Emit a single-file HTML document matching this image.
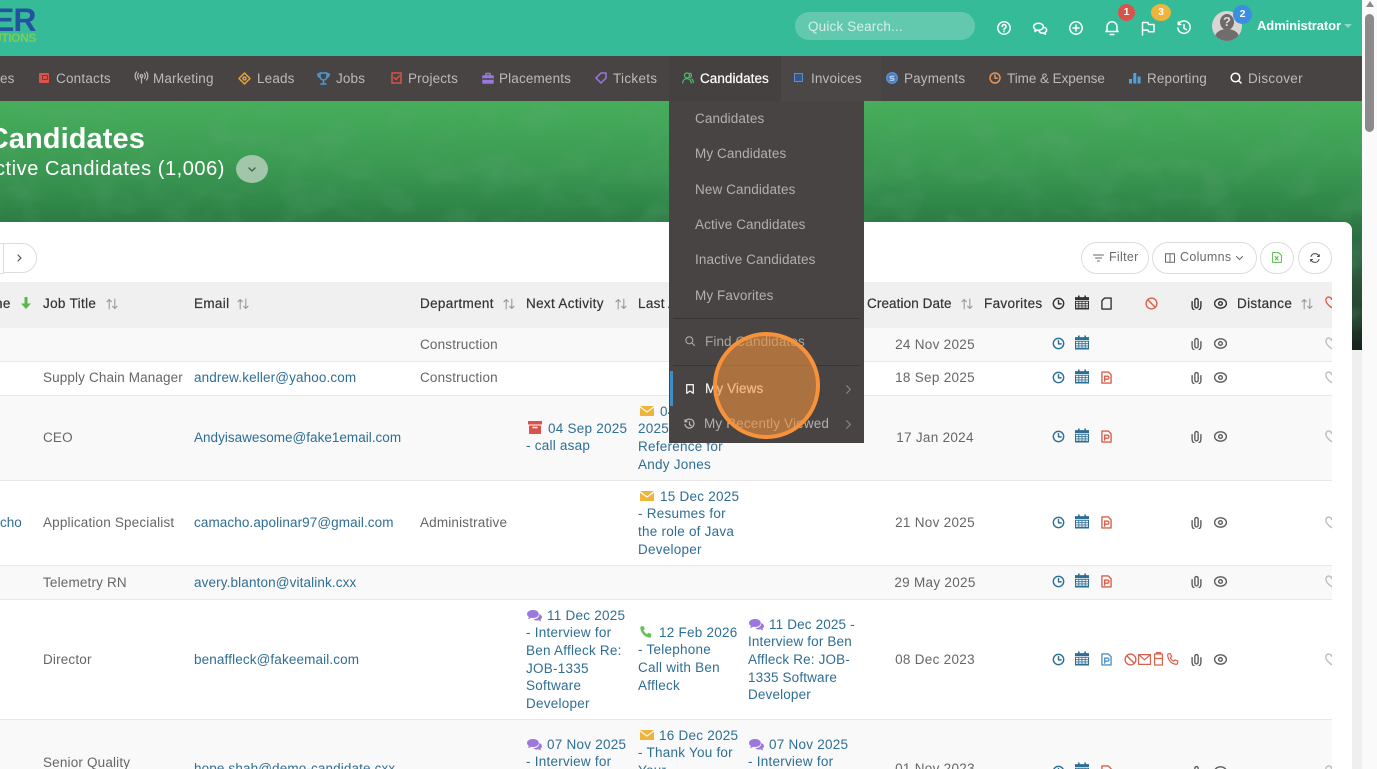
<!DOCTYPE html>
<html><head><meta charset="utf-8"><title>Candidates</title>
<style>
html,body{margin:0;padding:0;width:1377px;height:769px;overflow:hidden;background:#fff}
body{position:relative;font-family:"Liberation Sans",sans-serif;font-size:13.5px;letter-spacing:.17px;color:#666}
.a,.t,svg.i{position:absolute}
.t{white-space:nowrap;line-height:18px;margin-top:1px}
.n{color:#bdbab8;top:69px;letter-spacing:.15px}
.m{color:#b3b0ae;left:695px;letter-spacing:.1px}
.h{color:#333;top:294px;letter-spacing:.33px;-webkit-text-stroke:.2px #333}
.l{color:#2e6e94;line-height:17.8px;letter-spacing:.13px}
.la{letter-spacing:.24px;line-height:17.7px;margin-top:.6px}
.d{width:100px;left:885px;text-align:center;letter-spacing:.3px}
svg.i{fill:none;stroke:currentColor;stroke-width:1.5;stroke-linecap:round;stroke-linejoin:round;overflow:visible}
.cl{color:#2e6e94}.gr{color:#5c5c5c}.rd{color:#d9604c}
.pill{position:absolute;top:242px;height:30px;border:1px solid #dcdcdc;border-radius:16px;background:#fff}
.row{position:absolute;left:0;width:1332px;border-bottom:1px solid #e8e8e8}
</style></head><body>
<svg width="0" height="0" style="position:absolute"><defs>
<filter id="tx" x="0" y="0" width="100%" height="100%"><feTurbulence type="fractalNoise" baseFrequency=".025 .035" numOctaves="3" seed="7"/><feColorMatrix values="0 0 0 0 .12  0 0 0 0 .38  0 0 0 0 .18  0 0 0 2.2 -.95"/></filter>
<symbol id="clock" viewBox="0 0 14 14"><circle cx="7" cy="7" r="5.600"/><path d="M7 3.800V7.400H9.800"/></symbol>
<symbol id="cal" viewBox="0 0 14 14"><path fill="currentColor" stroke="none" d="M3 0h1.600v1.600h4.800V0H11v1.600h3v3H0v-3h3zM0 5.400h14V14H0zM1 6.300v1.400h2.400V6.300zm3.200 0v1.400h2.400V6.300zm3.200 0v1.400h2.400V6.300zm3.200 0v1.400H13V6.300zM1 8.600V10h2.400V8.600zm3.200 0V10h2.400V8.600zm3.200 0V10h2.400V8.600zm3.200 0V10H13V8.600zM1 10.900v1.400h2.400v-1.400zm3.200 0v1.400h2.400v-1.400zm3.200 0v1.400h2.400v-1.400zm3.200 0v1.400H13v-1.400z"/></symbol>
<symbol id="doc" viewBox="0 0 12 14"><path d="M1 1h7l3 3v9H1z"/><path d="M4 5.500h3a1.500 1.500 0 0 1 0 3.400H4zM4 5.500V11"/></symbol>
<symbol id="note" viewBox="0 0 12 14"><path d="M4 1h7v12H1V4z"/></symbol>
<symbol id="ban" viewBox="0 0 14 14"><circle cx="7" cy="7" r="5.800"/><path d="M3 3l8 8"/></symbol>
<symbol id="clip" viewBox="0 0 12 14"><path d="M7.800 4v6a1.800 1.800 0 0 1-3.600 0V3.400a1.800 1.800 0 0 1 3.600 0M10.800 5v5.200a4.800 4.800 0 0 1-9.600 0V5"/></symbol>
<symbol id="eye" viewBox="0 0 14 14"><ellipse cx="7" cy="7" rx="6.400" ry="5"/><circle cx="7" cy="7" r="2"/></symbol>
<symbol id="heart" viewBox="0 0 14 14"><path d="M7 12.500C3 9.500 1 7.400 1 4.800A3 3 0 0 1 7 3.600 3 3 0 0 1 13 4.800C13 7.400 11 9.500 7 12.500z"/></symbol>
<symbol id="sort" viewBox="0 0 12 12"><path d="M3.200 11V1.500M1 3.700l2.200-2.200 2.200 2.200M8.800 1v9.500M6.600 8.300l2.200 2.200L11 8.300"/></symbol>
<symbol id="env" viewBox="0 0 14 10"><path fill="currentColor" stroke="none" d="M0 0h14L7 5.200zM0 1.600l7 5.200 7-5.200V10H0z"/></symbol>
<symbol id="chat" viewBox="0 0 15 12"><path fill="currentColor" stroke="none" d="M6 0c3.300 0 5.800 1.700 5.800 4s-2.500 4-5.800 4c-.7 0-1.300 0-1.900-.2C3.100 8.600 2 9 .8 9c.6-.6 1-1.300 1.100-2C.7 6.300 0 5.200 0 4c0-2.300 2.700-4 6-4zM12.700 4.200c1.400.6 2.300 1.700 2.300 2.900 0 1-.6 1.900-1.600 2.500.1.600.5 1.200 1 1.700-1 0-2-.3-2.800-1-.5.100-1 .2-1.600.2-1.500 0-2.900-.5-3.700-1.300 3.600-.1 6.300-2.200 5.900-5z"/></symbol>
</defs></svg>

<!-- banner -->
<div class="a" style="left:0;top:101px;width:1362px;height:249px;background:linear-gradient(180deg,#46ae5b 0%,#3c9b53 25%,#2f8648 42%,#2f6c44 56%,#2b5238 74%,#1f3627 90%,#17241b 100%)"></div>
<svg class="a" style="left:0;top:101px;opacity:.26" width="1362" height="249"><rect width="1362" height="249" filter="url(#tx)"/></svg>
<div class="a" style="left:1352px;top:350px;width:10px;height:419px;background:#efefef"></div>
<div class="a" style="left:1362px;top:0;width:15px;height:769px;background:#fafafa"></div>
<div class="a" style="left:1365px;top:14px;width:9px;height:118px;border-radius:5px;background:#8c8a8a"></div>
<div class="a" style="left:1366px;top:1px;width:0;height:0;border-left:4px solid transparent;border-right:4px solid transparent;border-bottom:6px solid #8c8a8a"></div>

<!-- top bar -->
<div class="a" style="left:0;top:0;width:1362px;height:56px;background:#36bb99"></div>
<div class="t" style="left:-7px;top:3px;font:bold 32px/32px 'Liberation Sans',sans-serif;letter-spacing:-1px;color:#2352a0">ER</div>
<div class="t" style="left:-7px;top:31px;font:bold 12px/12px 'Liberation Sans',sans-serif;letter-spacing:-.4px;color:#7dcb5a">UTIONS</div>
<div class="a" style="left:795px;top:12px;width:180px;height:28px;border-radius:14px;background:#62c9ae"></div>
<div class="t" style="left:808px;top:17px;color:#d3f0e8">Quick Search...</div>
<svg class="i" style="left:997px;top:21px;color:#fff" width="14" height="14" viewBox="0 0 14 14"><circle cx="7" cy="7" r="6.200"/><path d="M5.200 5.500a1.900 1.900 0 1 1 2.800 1.700c-.7.400-1 .8-1 1.500M7 10.500v.1"/></svg>
<svg class="i" style="left:1032px;top:22px;color:#fff" width="16" height="14" viewBox="0 0 16 14"><path d="M6.500 1.200c2.800 0 4.800 1.600 4.800 3.500 0 2-2 3.500-4.800 3.500-.5 0-1 0-1.500-.2L3 9.500l.3-2.300C2.300 6.500 1.600 5.700 1.600 4.700c0-1.900 2.100-3.500 4.900-3.500z"/><path d="M11.500 5.200c2 .4 3.100 1.500 3.100 2.900 0 1-.6 1.800-1.400 2.300l.2 1.800-1.700-1.200c-2.200.4-4-.5-4.700-2.200"/></svg>
<svg class="i" style="left:1069px;top:21px;color:#fff" width="14" height="14" viewBox="0 0 14 14"><circle cx="7" cy="7" r="6.200"/><path d="M7 4v6M4 7h6"/></svg>
<svg class="i" style="left:1105px;top:20px;color:#fff" width="14" height="16" viewBox="0 0 14 16"><path d="M2 11.500V6.800a5 5 0 0 1 10 0v4.700zM.8 11.500h12.400M5.200 14.500h3.600"/></svg>
<svg class="i" style="left:1141px;top:21px;color:#fff" width="14" height="15" viewBox="0 0 14 15"><path d="M1.500 14V1.500h5.500l.5 2h5.500v7.200H7.500l-.5-1.600H1.500"/></svg>
<svg class="i" style="left:1177px;top:21px;color:#fff" width="14" height="14" viewBox="0 0 14 14"><path d="M1.500 3.200A6.200 6.200 0 1 1 .8 7M1.300 1v2.500h2.500M7 3.800v3.500l2.400 1.300"/></svg>
<div class="a" style="left:1118px;top:4px;width:17px;height:17px;border-radius:50%;background:#d9534a;color:#fff;font:bold 10.500px/17px 'Liberation Sans',sans-serif;text-align:center;letter-spacing:0">1</div>
<div class="a" style="left:1151px;top:4px;width:20px;height:17px;border-radius:50%;background:#efb43c;color:#fff;font:bold 10.500px/17px 'Liberation Sans',sans-serif;text-align:center;letter-spacing:0">3</div>
<div class="a" style="left:1212px;top:11px;width:30px;height:30px;border-radius:50%;background:#d8d5d3;overflow:hidden"><div class="a" style="left:8px;top:3px;width:14px;height:16px;border-radius:50%;background:#6e6a69"></div><div class="a" style="left:3px;top:18px;width:24px;height:16px;border-radius:50%;background:#716d6c"></div><div class="t" style="left:11px;top:1px;color:#ddd;font:bold 13px/17px 'Liberation Sans',sans-serif;letter-spacing:0">?</div></div>
<div class="a" style="left:1233px;top:5px;width:19px;height:19px;border-radius:50%;background:#3c8ee0;color:#fff;font:bold 10.500px/19px 'Liberation Sans',sans-serif;text-align:center;letter-spacing:0">2</div>
<div class="t" style="left:1257px;top:16px;color:#fff;font-weight:bold;font-size:13px;letter-spacing:-.1px">Administrator</div>
<div class="a" style="left:1344px;top:24px;width:0;height:0;border-left:4px solid transparent;border-right:4px solid transparent;border-top:4px solid #8fd8c5"></div>

<!-- nav -->
<div class="a" style="left:0;top:56px;width:1362px;height:45px;background:#474443"></div>
<div class="a" style="left:781px;top:56px;width:100px;height:45px;background:#4a4746"></div>
<div class="t n" style="left:0">es</div>
<div class="a" style="left:39px;top:73px;width:10px;height:10px;background:#d9534a;border-radius:1px"></div><div class="a" style="left:42px;top:75px;width:4px;height:3px;border:1px solid #7a3a34;border-radius:1px"></div><div class="t n" style="left:56px;letter-spacing:.2px">Contacts</div>
<svg class="i" style="left:135px;top:72px;color:#b7b4b2;stroke-width:1.300" width="13" height="12" viewBox="0 0 13 12"><circle cx="6.500" cy="4" r="1.300"/><path d="M6.500 5.500V11M3.500 1.500a4 4 0 0 0 0 5M9.500 1.500a4 4 0 0 1 0 5M1.500 0a6.500 6.500 0 0 0 0 8M11.500 0a6.500 6.500 0 0 1 0 8"/></svg><div class="t n" style="left:153px">Marketing</div>
<svg class="i" style="left:238px;top:72px;color:#e8a33d" width="13" height="13" viewBox="0 0 13 13"><path d="M6.500 1L12 6.500 6.500 12 1 6.500z"/><circle cx="6.500" cy="6.500" r="1.500"/></svg><div class="t n" style="left:257px">Leads</div>
<svg class="i" style="left:317px;top:72px;color:#4a9bd6" width="13" height="13" viewBox="0 0 13 13"><path d="M3 1h7v3.500a3.500 3.500 0 0 1-7 0zM3 2H.8c0 2 .8 3 2.500 3.500M10 2h2.200c0 2-.8 3-2.500 3.500M6.500 8v3M4 12h5"/></svg><div class="t n" style="left:336px">Jobs</div>
<svg class="i" style="left:391px;top:72px;color:#d9534a" width="11" height="12" viewBox="0 0 11 12"><path d="M1 1h9v10H1zM3 5.500l2 2 3.200-3.500"/></svg><div class="t n" style="left:408px">Projects</div>
<svg class="i" style="left:482px;top:72px;color:#9a78dd" width="12" height="12" viewBox="0 0 12 12"><path fill="#9a78dd" d="M1 4h10v7H1z"/><path d="M4 3.500V1.500h4v2"/><path stroke="#474443" d="M1 7h10"/></svg><div class="t n" style="left:499px">Placements</div>
<svg class="i" style="left:595px;top:72px;color:#9a78dd" width="12" height="12" viewBox="0 0 12 12"><path d="M1 6L6 1h5v5l-5 5z"/></svg><div class="t n" style="left:613px;letter-spacing:.3px">Tickets</div>
<div class="a" style="left:669px;top:56px;width:112px;height:45px;background:#454140"></div>
<svg class="i" style="left:682px;top:72px;color:#4cc06a;stroke-width:1.200" width="12" height="12" viewBox="0 0 12 12"><circle cx="5" cy="3.500" r="2.500"/><path d="M.8 11c0-2.800 1.700-4.300 4.200-4.300S9.200 8.200 9.200 11M8 1.200a2.400 2.400 0 0 1 0 4.400M9.800 7c1 .7 1.500 2 1.500 3.500"/></svg><div class="t n" style="left:700px;color:#fff;letter-spacing:.05px;-webkit-text-stroke:.2px #fff">Candidates</div>
<div class="a" style="left:794px;top:73px;width:7px;height:7px;border:1.500px solid #5c8fd0;background:#3a5688"></div><div class="t n" style="left:811px">Invoices</div>
<svg class="i" style="left:886px;top:72px;color:#5c8fd0" width="12" height="12" viewBox="0 0 12 12"><circle cx="6" cy="6" r="5.200" fill="#4a78c0"/><path stroke="#cfe0f5" stroke-width="1" d="M8 4.200H5a1 1 0 0 0 0 2h2a1 1 0 0 1 0 2H4"/></svg><div class="t n" style="left:904px">Payments</div>
<svg class="i" style="left:989px;top:72px;color:#e2945a" width="12" height="12" viewBox="0 0 12 12"><circle cx="6" cy="6" r="5"/><path d="M6 3v3.200h2.400"/></svg><div class="t n" style="left:1007px;letter-spacing:-.05px">Time &amp; Expense</div>
<svg class="i" style="left:1129px;top:72px;color:#4da5dc" width="12" height="12" viewBox="0 0 12 12"><path fill="#4da5dc" stroke="none" d="M0 7h3v4.500H0zM4.300 1h3v10.500h-3zM8.600 4.500h3v7h-3z"/></svg><div class="t n" style="left:1147px">Reporting</div>
<svg class="i" style="left:1230px;top:72px;color:#fff" width="12" height="12" viewBox="0 0 12 12"><circle cx="5.500" cy="5.500" r="4.300"/><path d="M8.700 8.700L11 11"/></svg><div class="t n" style="left:1248px;letter-spacing:.3px">Discover</div>

<!-- title -->
<div class="t" style="left:-200px;width:345px;text-align:right;top:120px;color:#fff;font:bold 29px/36px 'Liberation Sans',sans-serif;letter-spacing:.1px">Candidates</div>
<div class="t" style="left:-200px;width:425px;text-align:right;top:155px;color:#fff;font-size:20px;line-height:26px;letter-spacing:.55px">Active Candidates (1,006)</div>
<div class="a" style="left:236px;top:155px;width:32px;height:28px;border-radius:50%;background:#a2c6a9"></div>
<svg class="i" style="left:248px;top:167px;color:#4f6655" width="8" height="5" viewBox="0 0 8 5"><path d="M1 1l3 3 3-3"/></svg>

<!-- card -->
<div class="a" style="left:0;top:222px;width:1352px;height:547px;background:#fff;border-radius:0 8px 0 0"></div>
<div class="a" style="left:-30px;top:243px;width:32px;height:29px;border:1px solid #dcdcdc;background:#fff"></div>
<div class="a" style="left:3px;top:243px;width:32px;height:28px;border:1px solid #dcdcdc;border-radius:0 16px 16px 0;background:#fff"></div>
<svg class="i" style="left:17px;top:254px;color:#555;stroke-width:1.200" width="5" height="8" viewBox="0 0 5 8"><path d="M1 1l3 3-3 3"/></svg>
<div class="pill" style="left:1081px;width:66px"></div>
<svg class="i" style="left:1093px;top:254px;color:#666;stroke-width:1" width="11" height="8" viewBox="0 0 11 8"><path d="M.5 1h10M2.500 4h6M4.500 7h2"/></svg>
<div class="t" style="left:1109px;top:247px;font-size:12.500px;letter-spacing:.3px;color:#6a6a6a">Filter</div>
<div class="pill" style="left:1152px;width:103px"></div>
<svg class="i" style="left:1165px;top:253px;color:#666;stroke-width:1" width="10" height="10" viewBox="0 0 10 10"><path d="M.5.800h9v8.400h-9zM5 .8v8.400"/></svg>
<div class="t" style="left:1180px;top:247px;font-size:12.500px;letter-spacing:.3px;color:#6a6a6a">Columns</div>
<svg class="i" style="left:1236px;top:256px;color:#666;stroke-width:1" width="7" height="4" viewBox="0 0 7 4"><path d="M.5.500l3 3 3-3"/></svg>
<div class="pill" style="left:1260px;width:32px"></div>
<svg class="i" style="left:1272px;top:252px;color:#58b948;stroke-width:1" width="10" height="11" viewBox="0 0 10 11"><path d="M.6.600h6l2.800 2.800v7H.6z"/><path d="M3.200 4.500l3 3.500M6.200 4.500l-3 3.500"/></svg>
<div class="pill" style="left:1298px;width:32px"></div>
<svg class="i" style="left:1310px;top:253px;color:#444;stroke-width:1" width="10" height="10" viewBox="0 0 10 10"><path d="M1 3.500A4.300 4.300 0 0 1 9 3.300M9 6.500A4.300 4.300 0 0 1 1 6.700M7.500 3.500H9.300V1.700M2.500 6.500H.7v1.800"/></svg>

<!-- table rows -->
<div class="a" style="left:0;top:282px;width:1332px;height:46px;background:#f0f0f0"></div>
<div class="row" style="top:328px;height:33px;background:#f9f9f9"></div>
<div class="row" style="top:362px;height:33px;background:#fff"></div>
<div class="row" style="top:396px;height:84px;background:#f9f9f9"></div>
<div class="row" style="top:481px;height:84px;background:#fff"></div>
<div class="row" style="top:566px;height:33px;background:#f9f9f9"></div>
<div class="row" style="top:600px;height:119px;background:#fff"></div>
<div class="row" style="top:720px;height:49px;background:#f9f9f9;border:0"></div>

<!-- headers -->
<div class="t h" style="left:-5px">ne</div>
<svg class="i" style="left:21px;top:297px;color:#58b948" width="10" height="12" viewBox="0 0 10 12"><path fill="#58b948" stroke="none" d="M3.500 0h3v6.500H10L5 12 0 6.500h3.500z"/></svg>
<div class="t h" style="left:43px">Job Title</div><svg class="i" style="left:106px;top:298px;color:#9a9a9a;stroke-width:1.100" width="12" height="12"><use href="#sort"/></svg>
<div class="t h" style="left:194px">Email</div><svg class="i" style="left:237px;top:298px;color:#9a9a9a;stroke-width:1.100" width="12" height="12"><use href="#sort"/></svg>
<div class="t h" style="left:420px">Department</div><svg class="i" style="left:503px;top:298px;color:#9a9a9a;stroke-width:1.100" width="12" height="12"><use href="#sort"/></svg>
<div class="t h" style="left:526px">Next Activity</div><svg class="i" style="left:615px;top:298px;color:#9a9a9a;stroke-width:1.100" width="12" height="12"><use href="#sort"/></svg>
<div class="t h" style="left:638px">Last Activity</div>
<div class="t h" style="left:867px;letter-spacing:.1px">Creation Date</div><svg class="i" style="left:961px;top:298px;color:#9a9a9a;stroke-width:1.100" width="12" height="12"><use href="#sort"/></svg>
<div class="t h" style="left:984px">Favorites</div>
<svg class="i" style="left:1052px;top:297px;color:#333" width="13" height="13"><use href="#clock"/></svg>
<svg class="i" style="left:1075px;top:295px;color:#333" width="14" height="15"><use href="#cal"/></svg>
<svg class="i" style="left:1101px;top:297px;color:#333" width="11" height="13"><use href="#note"/></svg>
<svg class="i" style="left:1145px;top:297px;color:#d9604c" width="13" height="13"><use href="#ban"/></svg>
<svg class="i" style="left:1191px;top:297px;color:#333" width="11" height="13"><use href="#clip"/></svg>
<svg class="i" style="left:1214px;top:297px;color:#333" width="13" height="13"><use href="#eye"/></svg>
<div class="t h" style="left:1237px">Distance</div><svg class="i" style="left:1301px;top:298px;color:#9a9a9a;stroke-width:1.100" width="12" height="12"><use href="#sort"/></svg>
<div class="a" style="left:1325px;top:296px;width:7px;height:14px;overflow:hidden"><svg class="i" style="left:0;top:0;color:#d9604c" width="13" height="13"><use href="#heart"/></svg></div>

<!-- row 1 -->
<div class="t" style="left:420px;top:335px">Construction</div>
<div class="t d" style="top:335px">24 Nov 2025</div>
<!-- row 2 -->
<div class="t" style="left:43px;top:368px;letter-spacing:.13px">Supply Chain Manager</div>
<div class="t l" style="left:194px;top:368px">andrew.keller@yahoo.com</div>
<div class="t" style="left:420px;top:368px">Construction</div>
<div class="t d" style="top:368px">18 Sep 2025</div>
<!-- row 3 -->
<div class="t" style="left:43px;top:428px">CEO</div>
<div class="t l" style="left:194px;top:428px;letter-spacing:.02px">Andyisawesome@fake1email.com</div>
<svg class="i" style="left:528px;top:421px;color:#d9534a" width="14" height="13" viewBox="0 0 14 13"><path fill="#d9534a" stroke="none" d="M0 0h14v3.500H0zM1 4.500h12V13H1z"/><path stroke="#f9f9f9" d="M5 6.500h4"/></svg>
<div class="t l la" style="left:526px;top:419px"><span style="margin-left:22px">04 Sep 2025</span><br>- call asap</div>
<svg class="i" style="left:640px;top:406px;color:#efb43c" width="14" height="10"><use href="#env"/></svg>
<div class="t l la" style="left:638px;top:402px"><span style="margin-left:22px">04 Sep</span><br>2025<br>Reference for<br>Andy Jones</div>
<div class="t d" style="top:428px">17 Jan 2024</div>
<!-- row 4 -->
<div class="t l" style="left:0;top:513px;letter-spacing:0">cho</div>
<div class="t" style="left:43px;top:513px">Application Specialist</div>
<div class="t l" style="left:194px;top:513px;letter-spacing:.1px">camacho.apolinar97@gmail.com</div>
<div class="t" style="left:420px;top:513px">Administrative</div>
<svg class="i" style="left:640px;top:491px;color:#efb43c" width="14" height="10"><use href="#env"/></svg>
<div class="t l la" style="left:638px;top:487px"><span style="margin-left:22px">15 Dec 2025</span><br>- Resumes for<br>the role of Java<br>Developer</div>
<div class="t d" style="top:513px">21 Nov 2025</div>
<!-- row 5 -->
<div class="t" style="left:43px;top:573px">Telemetry RN</div>
<div class="t l" style="left:194px;top:573px">avery.blanton@vitalink.cxx</div>
<div class="t d" style="top:573px">29 May 2025</div>
<!-- row 6 -->
<div class="t" style="left:43px;top:650px">Director</div>
<div class="t l" style="left:194px;top:650px">benaffleck@fakeemail.com</div>
<svg class="i" style="left:527px;top:610px;color:#9a78dd" width="15" height="12"><use href="#chat"/></svg>
<div class="t l la" style="left:526px;top:606px"><span style="margin-left:21px">11 Dec 2025</span><br>- Interview for<br>Ben Affleck Re:<br>JOB-1335<br>Software<br>Developer</div>
<svg class="i" style="left:640px;top:626px;color:#6cc05c" width="12" height="12" viewBox="0 0 12 12"><path fill="#6cc05c" stroke="none" d="M1 .5L3.500 0l1.300 3-1.400 1.300c.7 1.600 2 3 3.700 3.800l1.300-1.400L11.500 8l-.5 2.600c-.2.800-.9 1.200-1.600 1.100C4.500 11 .9 7 .3 2 .2 1.300.4.700 1 .5z"/></svg>
<div class="t l la" style="left:638px;top:623px"><span style="margin-left:21px">12 Feb 2026</span><br>- Telephone<br>Call with Ben<br>Affleck</div>
<svg class="i" style="left:749px;top:619px;color:#9a78dd" width="15" height="12"><use href="#chat"/></svg>
<div class="t l la" style="left:748px;top:615px;letter-spacing:.15px"><span style="margin-left:21px">11 Dec 2025 -</span><br>Interview for Ben<br>Affleck Re: JOB-<br>1335 Software<br>Developer</div>
<div class="t d" style="top:650px">08 Dec 2023</div>
<!-- row 7 -->
<div class="t" style="left:43px;top:753px">Senior Quality</div>
<div class="t l" style="left:194px;top:759px">hope.shah@demo-candidate.cxx</div>
<svg class="i" style="left:527px;top:739px;color:#9a78dd" width="15" height="12"><use href="#chat"/></svg>
<div class="t l la" style="left:526px;top:735px"><span style="margin-left:21px">07 Nov 2025</span><br>- Interview for</div>
<svg class="i" style="left:640px;top:730px;color:#efb43c" width="14" height="10"><use href="#env"/></svg>
<div class="t l la" style="left:638px;top:726px"><span style="margin-left:21px">16 Dec 2025</span><br>- Thank You for<br>Your</div>
<svg class="i" style="left:749px;top:739px;color:#9a78dd" width="15" height="12"><use href="#chat"/></svg>
<div class="t l la" style="left:748px;top:735px"><span style="margin-left:21px">07 Nov 2025</span><br>- Interview for</div>
<div class="t d" style="top:759px">01 Nov 2023</div>

<!-- row icons -->
<svg class="i cl" style="left:1052px;top:337px" width="13" height="13"><use href="#clock"/></svg><svg class="i cl" style="left:1075px;top:335px" width="14" height="15"><use href="#cal"/></svg><svg class="i gr" style="left:1191px;top:337px" width="11" height="13"><use href="#clip"/></svg><svg class="i gr" style="left:1214px;top:337px" width="13" height="13"><use href="#eye"/></svg>
<svg class="i cl" style="left:1052px;top:371px" width="13" height="13"><use href="#clock"/></svg><svg class="i cl" style="left:1075px;top:369px" width="14" height="15"><use href="#cal"/></svg><svg class="i rd" style="left:1101px;top:371px" width="11" height="13"><use href="#doc"/></svg><svg class="i gr" style="left:1191px;top:371px" width="11" height="13"><use href="#clip"/></svg><svg class="i gr" style="left:1214px;top:371px" width="13" height="13"><use href="#eye"/></svg>
<svg class="i cl" style="left:1052px;top:430px" width="13" height="13"><use href="#clock"/></svg><svg class="i cl" style="left:1075px;top:428px" width="14" height="15"><use href="#cal"/></svg><svg class="i rd" style="left:1101px;top:430px" width="11" height="13"><use href="#doc"/></svg><svg class="i gr" style="left:1191px;top:430px" width="11" height="13"><use href="#clip"/></svg><svg class="i gr" style="left:1214px;top:430px" width="13" height="13"><use href="#eye"/></svg>
<svg class="i cl" style="left:1052px;top:516px" width="13" height="13"><use href="#clock"/></svg><svg class="i cl" style="left:1075px;top:514px" width="14" height="15"><use href="#cal"/></svg><svg class="i rd" style="left:1101px;top:516px" width="11" height="13"><use href="#doc"/></svg><svg class="i gr" style="left:1191px;top:516px" width="11" height="13"><use href="#clip"/></svg><svg class="i gr" style="left:1214px;top:516px" width="13" height="13"><use href="#eye"/></svg>
<svg class="i cl" style="left:1052px;top:575px" width="13" height="13"><use href="#clock"/></svg><svg class="i cl" style="left:1075px;top:573px" width="14" height="15"><use href="#cal"/></svg><svg class="i rd" style="left:1101px;top:575px" width="11" height="13"><use href="#doc"/></svg><svg class="i gr" style="left:1191px;top:575px" width="11" height="13"><use href="#clip"/></svg><svg class="i gr" style="left:1214px;top:575px" width="13" height="13"><use href="#eye"/></svg>
<svg class="i cl" style="left:1052px;top:653px" width="13" height="13"><use href="#clock"/></svg><svg class="i cl" style="left:1075px;top:651px" width="14" height="15"><use href="#cal"/></svg><svg class="i" style="left:1101px;top:653px;color:#4f93c8" width="11" height="13"><use href="#doc"/></svg><svg class="i rd" style="left:1124px;top:653px" width="13" height="13"><use href="#ban"/></svg>
<svg class="i rd" style="left:1138px;top:654px;stroke-width:1.200" width="13" height="11" viewBox="0 0 13 11"><path d="M.6.600h11.800v9.800H.6zM.6.600l5.900 5.200L12.400.6"/></svg>
<svg class="i rd" style="left:1154px;top:652px;stroke-width:1.200" width="9" height="14" viewBox="0 0 9 14"><path d="M.6 2h7.800v11H.6zM.6 6.500h7.800M2.500 2V.6h4V2"/></svg>
<svg class="i rd" style="left:1167px;top:653px;stroke-width:1.200" width="12" height="12" viewBox="0 0 12 12"><path d="M1 1l2.400-.3 1.200 2.800-1.300 1.200c.8 1.700 1.900 2.800 3.500 3.500l1.200-1.300 2.800 1.200-.3 2.400c-.2.600-.7.900-1.300.8C4.500 10.800 1.200 7.500.7 2.300.6 1.700.8 1.200 1 1z"/></svg>
<svg class="i gr" style="left:1191px;top:653px" width="11" height="13"><use href="#clip"/></svg><svg class="i gr" style="left:1214px;top:653px" width="13" height="13"><use href="#eye"/></svg>
<svg class="i cl" style="left:1052px;top:765px" width="13" height="13"><use href="#clock"/></svg><svg class="i cl" style="left:1075px;top:762px" width="14" height="15"><use href="#cal"/></svg><svg class="i rd" style="left:1101px;top:765px" width="11" height="13"><use href="#doc"/></svg><svg class="i gr" style="left:1191px;top:765px" width="11" height="13"><use href="#clip"/></svg><svg class="i gr" style="left:1214px;top:765px" width="13" height="13"><use href="#eye"/></svg>
<div class="a" style="left:1325px;top:337px;width:7px;height:432px;overflow:hidden;color:#bdbdbd">
<svg class="i" style="left:0;top:0" width="13" height="13"><use href="#heart"/></svg>
<svg class="i" style="left:0;top:34px" width="13" height="13"><use href="#heart"/></svg>
<svg class="i" style="left:0;top:93px" width="13" height="13"><use href="#heart"/></svg>
<svg class="i" style="left:0;top:179px" width="13" height="13"><use href="#heart"/></svg>
<svg class="i" style="left:0;top:238px" width="13" height="13"><use href="#heart"/></svg>
<svg class="i" style="left:0;top:316px" width="13" height="13"><use href="#heart"/></svg>
<svg class="i" style="left:0;top:428px" width="13" height="13"><use href="#heart"/></svg>
</div>

<!-- dropdown -->
<div class="a" style="left:669px;top:101px;width:195px;height:342px;background:#474443"></div>
<div class="t m" style="top:109px">Candidates</div>
<div class="t m" style="top:144px">My Candidates</div>
<div class="t m" style="top:180px">New Candidates</div>
<div class="t m" style="top:215px">Active Candidates</div>
<div class="t m" style="top:250px">Inactive Candidates</div>
<div class="t m" style="top:286px">My Favorites</div>
<div class="a" style="left:673px;top:318px;width:187px;height:1px;background:#383534"></div>
<svg class="i" style="left:685px;top:336px;color:#aaa;stroke-width:1.100" width="10" height="10" viewBox="0 0 10 10"><circle cx="4.300" cy="4.300" r="3.500"/><path d="M7 7l2.500 2.500"/></svg>
<div class="t m" style="left:705px;top:332px;color:#a8a5a3">Find Candidates</div>
<div class="a" style="left:673px;top:365px;width:187px;height:1px;background:#383534"></div>
<div class="a" style="left:670px;top:371px;width:3px;height:35px;background:#3f8fc7"></div>
<svg class="i" style="left:686px;top:384px;color:#f1f1f1;stroke-width:1.300" width="8" height="10" viewBox="0 0 8 10"><path d="M.7.700h6.600v8.600L4 7 .7 9.300z"/></svg>
<div class="t m" style="left:705px;top:379px;color:#efefef;-webkit-text-stroke:.2px #efefef">My Views</div>
<svg class="i" style="left:846px;top:385px;color:#8d8a88;stroke-width:1.100" width="5" height="9" viewBox="0 0 5 9"><path d="M.7.700l3.600 3.800L.7 8.300"/></svg>
<svg class="i" style="left:684px;top:419px;color:#bbb;stroke-width:1.200" width="11" height="11" viewBox="0 0 11 11"><path d="M1.300 2.700A4.500 4.500 0 1 1 1 5.500M1 .8v2h2M5.500 3v2.700l1.700 1"/></svg>
<div class="t m" style="left:704px;top:414px;letter-spacing:.17px">My Recently Viewed</div>
<svg class="i" style="left:846px;top:420px;color:#8d8a88;stroke-width:1.100" width="5" height="9" viewBox="0 0 5 9"><path d="M.7.700l3.600 3.800L.7 8.300"/></svg>
<!-- highlight -->
<div class="a" style="left:713px;top:332px;width:107px;height:107px;box-sizing:border-box;border-radius:50%;border:4.500px solid #f5923b;background:rgba(245,146,59,.58)"></div>
</body></html>
